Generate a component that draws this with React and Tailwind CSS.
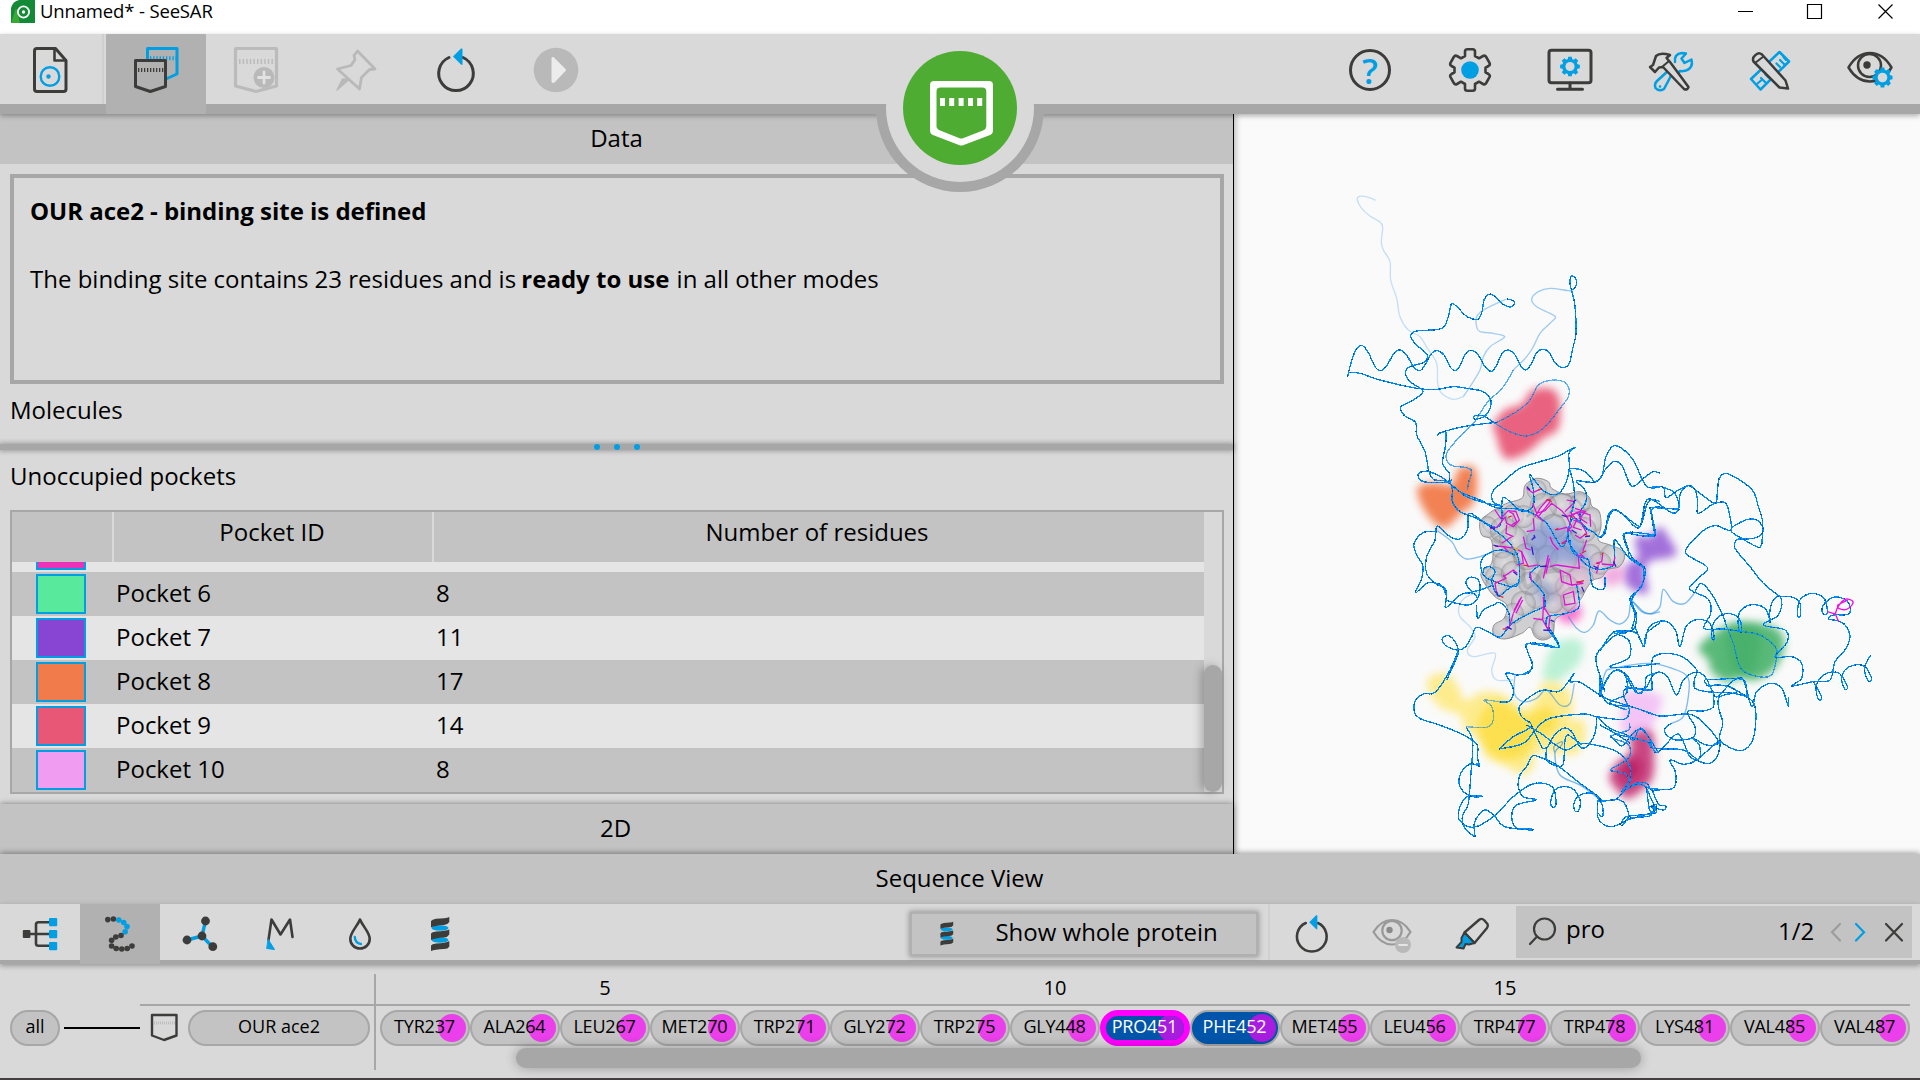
import React from "react";

const DARK = "#3c3c3b";
const BLUE = "#009fe3";

/* ---------- curve helpers ---------- */
function toPoints(s) {
  return s.trim().split(/\s+/).map((p) => p.split(",").map(Number));
}
function spline(s, closed) {
  const p = toPoints(s);
  const n = p.length;
  const at = (i) => (closed ? p[(i + n) % n] : p[Math.max(0, Math.min(n - 1, i))]);
  let d = `M${p[0][0]} ${p[0][1]}`;
  const last = closed ? n : n - 1;
  for (let i = 0; i < last; i++) {
    const [a, b, c, e] = [at(i - 1), at(i), at(i + 1), at(i + 2)];
    d += `C${(b[0] + (c[0] - a[0]) / 6).toFixed(1)} ${(b[1] + (c[1] - a[1]) / 6).toFixed(1)} ${(c[0] - (e[0] - b[0]) / 6).toFixed(1)} ${(c[1] - (e[1] - b[1]) / 6).toFixed(1)} ${c[0]} ${c[1]}`;
  }
  return closed ? d + "Z" : d;
}

/* ---------- icons ---------- */
function gearPath(cx, cy, ro, ri, teeth) {
  const out = [];
  for (let i = 0; i < teeth; i++) {
    const base = (i * 2 * Math.PI) / teeth - Math.PI / 2;
    [[-0.42, ri], [-0.27, ro], [0.27, ro], [0.42, ri]].forEach(([o, r]) => {
      const a = base + (o * 2 * Math.PI * 0.85) / teeth;
      out.push(`${(cx + r * Math.cos(a)).toFixed(2)} ${(cy + r * Math.sin(a)).toFixed(2)}`);
    });
  }
  return "M" + out.join("L") + "Z";
}

function Icon({ x, y, w, h, children }) {
  return (
    <svg width={w} height={h} viewBox={`${x} ${y} ${w} ${h}`} fill="none" strokeLinecap="round" strokeLinejoin="round" className="block shrink-0">
      {children}
    </svg>
  );
}

const FileIcon = () => (
  <Icon x={20} y={40} w={60} h={60}>
    <path d="M37 48.500H55.500L66 60.500V89q0 2.500-2.500 2.500H37q-2.500 0-2.500-2.500V51q0-2.500 2.500-2.500Z" stroke={DARK} strokeWidth="3" />
    <path d="M54.500 49V60.500H65.500" stroke={DARK} strokeWidth="2.600" />
    <circle cx="50" cy="76.500" r="9.300" stroke={BLUE} strokeWidth="2.400" />
    <circle cx="48.500" cy="76.500" r="2.200" fill={BLUE} />
  </Icon>
);
const PocketsIcon = () => (
  <Icon x={126} y={40} w={60} h={60}>
    <path d="M147.500 58V48.500H177V74L167 78.500" stroke={BLUE} strokeWidth="3" />
    <path d="M150 58.200H176" stroke={BLUE} strokeWidth="4" strokeDasharray="1.300 1.900" strokeLinecap="butt" />
    <path d="M135.500 60.500H165.500V86.500L150.300 91.500L135.500 86.500Z" stroke={DARK} strokeWidth="3" />
    <path d="M138 70H164" stroke={DARK} strokeWidth="4" strokeDasharray="1.300 1.700" strokeLinecap="butt" />
  </Icon>
);
const AddPocketIcon = () => (
  <Icon x={226} y={40} w={60} h={60}>
    <path d="M235.500 48.500H276.500V86L256 91.500L235.500 86Z" stroke="#bbb" strokeWidth="3.200" />
    <path d="M239 61.500H274" stroke="#bbb" strokeWidth="5" strokeDasharray="1.500 2.100" strokeLinecap="butt" />
    <circle cx="264" cy="77.500" r="10.500" fill="#b9b9b9" />
    <path d="M258.500 77.500H269.500M264 72V83" stroke="#e2e2e2" strokeWidth="2.800" />
  </Icon>
);
const PinIcon = () => (
  <Icon x={326} y={40} w={60} h={60}>
    <path d="M357.500 51L375 69L369.500 69.500L361.500 77.500L359.500 89L348.500 79L337.500 69L351 65.500L355 59.500L354 55.500Z" stroke="#b9b9b9" strokeWidth="2.800" />
    <path d="M349 79.500L337 90L342.500 79Z" fill="#b9b9b9" stroke="#b9b9b9" strokeWidth="1.500" />
  </Icon>
);
const ResetIcon = ({ scale = 1 }) => (
  <svg width={60 * scale} height={60 * scale} viewBox="426 40 60 60" fill="none" className="block">
    <path d="M449 57.500A17.300 17.300 0 1 0 463 57.500" stroke={DARK} strokeWidth="3" strokeLinecap="round" />
    <path d="M453 56.500L461 48.500Q462.500 48 462.500 49.500V64Q462.500 65.500 461 64.500Z" fill={BLUE} />
  </svg>
);
const PlayIcon = () => (
  <Icon x={526} y={40} w={60} h={60}>
    <circle cx="556" cy="70" r="22.300" fill="#b9b9b9" />
    <path d="M551.500 58Q553 56 555 58.500L565.500 69Q566.500 70 565.500 71L555 82Q553 84 551.500 82Z" fill="#ececec" />
  </Icon>
);
const HelpIcon = () => (
  <div className="flex h-[42px] w-[42px] items-center justify-center rounded-full border-[3px] border-[#3c3c3b] text-[35px] leading-none font-semibold text-[#009fe3]">
    ?
  </div>
);
const GearIcon = () => (
  <Icon x={1440} y={40} w={60} h={60}>
    <path
      d="M1465 56V51.500Q1465 49.200 1467.500 49.200H1472.500Q1475 49.200 1475 51.500V56L1479 58.300L1483 56Q1485 55 1486.200 57L1489.500 62.800Q1490.500 64.800 1488.500 66L1485.500 67.700V72.300L1488.500 74Q1490.500 75.200 1489.500 77.200L1486.200 83Q1485 85 1483 84L1479 81.700L1475 84V88.500Q1475 90.800 1472.500 90.800H1467.500Q1465 90.800 1465 88.500V84L1461 81.700L1457 84Q1455 85 1453.800 83L1450.500 77.200Q1449.500 75.200 1451.500 74L1454.500 72.300V67.700L1451.500 66Q1449.500 64.800 1450.500 62.800L1453.800 57Q1455 55 1457 56L1461 58.300Z"
      stroke={DARK}
      strokeWidth="2.600"
    />
    <circle cx="1470" cy="70" r="8.800" fill={BLUE} />
  </Icon>
);
const MonitorIcon = () => (
  <Icon x={1540} y={40} w={60} h={60}>
    <rect x="1549" y="50.300" width="42" height="32.400" rx="2.500" stroke={DARK} strokeWidth="3" />
    <path d="M1570 83V89M1557.500 89.300H1582.500" stroke={DARK} strokeWidth="3" />
    <path d={gearPath(1570, 66.500, 10, 7.800, 8)} fill={BLUE} />
    <circle cx="1570" cy="66.500" r="4.600" fill="#d9d9d9" />
  </Icon>
);
const ToolsIcon = () => (
  <Icon x={1640} y={40} w={60} h={60}>
    <path d="M1673 72L1664 89Q1659 92 1655.500 88Q1654 84 1657 81L1669 70M1675 62Q1674 54 1682 53L1686 53.500L1681.500 58.500L1684.500 63L1691.500 59.500Q1693.500 68 1686 70.500Q1682 71.500 1680 71L1677 74" stroke={BLUE} strokeWidth="2.500" />
    <circle cx="1660" cy="86.500" r="1.300" fill={BLUE} />
    <path d="M1663 67L1684 89Q1687.500 90.500 1688.500 87L1670 62L1666.500 58L1670 55Q1660 52 1656 56L1653 65L1650 67L1655 72L1659 67.500Z" fill="#d9d9d9" stroke={DARK} strokeWidth="2.500" />
    <path d="M1662 67L1669 61" stroke={DARK} strokeWidth="2" />
  </Icon>
);
const RulerPencilIcon = () => (
  <Icon x={1740} y={40} w={60} h={60}>
    <path d="M1751 79L1779.500 52L1789 61.500L1760.500 89.500Z" stroke={BLUE} strokeWidth="2.500" />
    <path d="M1757.500 83.500L1761 80.500M1761 78L1765.500 82.500M1765.500 74.500L1768.500 77.500M1776.500 63.500L1780 67M1780 60L1784.500 64.500M1783.500 57L1786 60" stroke={BLUE} strokeWidth="2.200" />
    <path d="M1753.500 61.500Q1752 58 1755 55.500Q1758.500 51.500 1762 54.500L1785.500 80.500L1788 88.500L1779.500 87.500Z" fill="#d9d9d9" stroke={DARK} strokeWidth="2.500" />
    <path d="M1755 63L1763.500 56.500" stroke={DARK} strokeWidth="2" />
  </Icon>
);
const EyeGearIcon = () => (
  <Icon x={1840} y={40} w={60} h={60}>
    <path d="M1848.500 67.500Q1857 53 1870 53Q1883 53 1891.500 67.500Q1883 81.500 1870 81.500Q1857 81.500 1848.500 67.500Z" stroke={DARK} strokeWidth="2.500" />
    <circle cx="1869.500" cy="65.500" r="11.500" stroke={DARK} strokeWidth="2.500" />
    <circle cx="1867" cy="65" r="3.700" fill={DARK} />
    <path d={gearPath(1882.500, 77.500, 10.200, 8, 8)} fill={BLUE} />
    <circle cx="1882.500" cy="77.500" r="4.800" fill="#d9d9d9" />
  </Icon>
);

const TreeIcon = () => (
  <Icon x={10} y={904} w={60} h={60}>
    <path d="M50 922.300H38.500Q36 922.300 36 924.500V943.500Q36 945.700 38.500 945.700H50M28 934H50" stroke={DARK} strokeWidth="2.600" />
    <rect x="22.800" y="930" width="7.600" height="8" rx="1" fill={DARK} />
    <rect x="49" y="918" width="8.200" height="8.200" rx="1" fill={BLUE} />
    <rect x="49" y="930" width="8.200" height="8.200" rx="1" fill={BLUE} />
    <rect x="49" y="942" width="8.200" height="8.200" rx="1" fill={BLUE} />
  </Icon>
);
const ChainIcon = () => {
  const dots = toPoints("107.8,919.6 113.4,919 118.8,920 123.7,922.5 127,926.6 125.2,931.7 121,935.5 115.8,937 111.6,940.3 111.6,946 116.2,948.5 121.8,949 127.2,948.5 132,946");
  return (
    <Icon x={90} y={904} w={60} h={60}>
      {dots.map(([x, y], i) => (
        <circle key={i} cx={x} cy={y} r="2.800" fill={i >= 2 && i <= 5 ? BLUE : DARK} />
      ))}
    </Icon>
  );
};
const MoleculeIcon = () => (
  <Icon x={170} y={904} w={60} h={60}>
    <path d="M205.500 921L202 936L187 940M202 936L212.500 947" stroke={BLUE} strokeWidth="3.400" />
    <circle cx="205.500" cy="921" r="4.400" fill={DARK} />
    <circle cx="202" cy="936" r="4.400" fill={DARK} />
    <circle cx="187" cy="940" r="4.400" fill={DARK} />
    <circle cx="212.800" cy="946.700" r="4.400" fill={DARK} />
  </Icon>
);
const MIcon = () => (
  <Icon x={250} y={904} w={60} h={60}>
    <path d="M268.500 940L271.500 919.500L280.500 934.500L290 919.500L292.500 937" stroke={DARK} strokeWidth="2.600" />
    <path d="M268.300 939.500L274.500 949.500L267 948.500Z" fill={BLUE} stroke={BLUE} />
  </Icon>
);
const DropIcon = () => (
  <Icon x={330} y={904} w={60} h={60}>
    <path d="M360 919.500C357 927 350.300 932 350.300 939A9.700 9.500 0 0 0 369.700 939C369.700 932 363 927 360 919.500Z" stroke={DARK} strokeWidth="2.600" />
    <path d="M354.800 937Q355 943 361 944" stroke={BLUE} strokeWidth="2.400" />
  </Icon>
);
const HelixIcon = ({ scale = 1 }) => (
  <svg width={22 * scale} height={36 * scale} viewBox="429 916 22 36" className="block shrink-0">
    <ellipse cx="440" cy="928" rx="8.500" ry="2.800" fill={BLUE} />
    <ellipse cx="440" cy="940" rx="8.500" ry="2.800" fill={BLUE} />
    <path d="M431 921Q432 919.500 436 918.800Q446 918.500 449.300 917V922Q448 924.500 444 925Q435 925.500 431 927.500Z" fill={DARK} />
    <path d="M431 933.500Q432 932 436 931.500Q446 931 449.300 929.500V934.500Q448 937 444 937.500Q435 938 431 940Z" fill={DARK} />
    <path d="M431 945.500Q432 944 436 943.500Q446 943 449.300 941V946.500Q448 949 444 949Q435 949.500 431 951Z" fill={DARK} />
  </svg>
);
const EyeMinusIcon = () => (
  <Icon x={1362} y={904} w={60} h={60}>
    <path d="M1373.500 932Q1381 920 1392 920Q1403 920 1410.500 932Q1403 944.500 1392 944.500Q1381 944.500 1373.500 932Z" stroke="#999" strokeWidth="2.200" />
    <circle cx="1392" cy="930.500" r="9.700" stroke="#999" strokeWidth="2.200" />
    <circle cx="1389.500" cy="930" r="3.200" fill="#8a8a8a" />
    <circle cx="1403" cy="945" r="8" fill="#b9b9b9" />
    <path d="M1399 945H1407" stroke="#e4e4e4" strokeWidth="1.800" />
  </Icon>
);
const MarkerIcon = () => (
  <Icon x={1442} y={904} w={60} h={60}>
    <path d="M1464.500 932.500L1479.500 919.500Q1482 918 1484 920L1487.500 924Q1488.500 926 1487 928L1474.500 943Z" fill="#d9d9d9" stroke={DARK} strokeWidth="2.400" />
    <path d="M1464.500 932.500L1474.500 943L1469 944.500L1465.500 944L1463.500 948.500L1456.500 947.500L1461.500 942L1461.500 938Z" fill={BLUE} stroke={DARK} strokeWidth="2" />
  </Icon>
);

function SequencePocketIcon() {
  return (
    <Icon x={146} y={1010} w={36} h={36}>
      <path d="M152 1015H176.500V1035.500L164 1040L152 1035.500Z" stroke={DARK} strokeWidth="2.400" />
      <path d="M154 1023H175" stroke="#bdbdbd" strokeWidth="3" strokeDasharray="1 1" strokeLinecap="butt" />
    </Icon>
  );
}

/* ---------- 3D scene ---------- */
const T = {
  a: "translate(1320 170) scale(.33333)",
  b: "translate(1380 440) scale(.33333)",
  c: "translate(1380 620) scale(.33333)",
  d: "translate(1600 430) scale(.33333)",
};

const BLOBS = [
  ["a", "#e85775", 0.92, "520,765 555,720 605,702 635,662 690,655 718,690 715,775 670,805 625,845 565,868 540,840 530,800"],
  ["b", "#f27b4b", 0.95, "115,140 170,128 215,135 238,85 285,85 290,160 272,200 248,215 215,250 190,264 155,240 120,185"],
  ["d", "#9a62d8", 0.9, "105,330 130,315 145,325 180,290 205,320 230,368 200,385 160,390 135,415 145,480 130,492 90,475 70,440 85,400 115,385"],
  ["b", "#f094d8", 0.75, "670,390 720,375 735,410 700,438 670,425"],
  ["b", "#f94fc0", 0.75, "530,500 590,490 605,525 575,550 540,540"],
  ["c", "#b5f0d2", 0.9, "495,130 510,95 530,65 600,60 605,115 565,160 520,190 490,170"],
  ["c", "#fee97c", 0.85, "145,175 200,160 235,200 255,240 310,215 370,225 430,270 465,240 495,185 560,205 580,260 570,300 610,300 615,360 580,405 510,395 465,400 460,440 430,465 370,435 320,410 300,360 255,330 240,285 190,268 150,225"],
  ["c", "#fddc35", 0.7, "300,290 350,240 410,270 440,290 500,260 530,300 510,340 460,350 450,390 390,420 330,400 300,350"],
  ["d", "#3eae62", 0.85, "295,655 340,610 400,580 470,578 520,590 550,620 550,665 525,715 470,750 420,745 380,755 335,725 325,690"],
  ["d", "#2fa457", 0.35, "390,590 470,590 480,650 455,730 400,720 380,650"],
  ["d", "#f1b3f4", 0.75, "70,790 120,780 185,800 175,850 155,890 130,915 65,905 65,850"],
  ["d", "#c22c6e", 0.85, "95,915 155,905 162,970 155,1050 90,1105 60,1090 28,1045 50,1000 90,970"],
  ["d", "#b30d56", 0.6, "60,1020 100,980 125,1010 110,1045 75,1055"],
];

const SURFACE =
  "300,245 325,222 350,205 385,188 415,180 430,168 436,135 470,115 505,125 515,145 555,162 600,155 628,172 635,198 658,215 663,260 655,300 690,315 725,330 734,352 718,380 685,388 665,412 640,420 620,445 602,478 570,510 545,525 525,540 518,585 490,600 465,590 450,562 425,580 375,597 342,585 342,555 372,535 380,495 345,470 320,440 303,400 335,370 338,320 330,295 305,285";

const BUBBLES = toPoints(
  "470,150 545,195 600,190 635,240 400,225 345,245 320,262 370,270 430,230 490,200 365,320 400,300 375,370 345,410 400,400 470,300 520,260 580,310 610,270 630,345 700,350 660,370 600,420 560,440 510,420 470,470 520,490 430,490 400,520 370,565 490,565 580,480 350,435 440,350 500,350 550,360 450,430"
);

const BACKBONE = [
  ["a", 1, "560,387 580,392 583,402 570,411 545,400 520,376 505,374 492,390 486,425 475,447 455,446 435,435 405,405 393,405 385,440 372,470 350,479 290,483 272,497 285,520 320,552 322,565 310,578 270,590 256,608 270,635 305,658 305,672 280,690 245,708 241,718 255,738 287,758 290,795 315,845 325,900"],
  ["a", 1, "83,620 90,590 105,545 125,526 145,548 165,590 182,602 200,588 220,553 240,540 260,555 280,590 300,602 318,580 335,550 352,542 372,555 390,590 405,602 420,588 435,553 455,541 475,555 495,590 515,604 530,585 545,552 565,540 585,555 605,592 620,599 635,580 650,548 670,538 688,548 705,578 730,593 748,580 757,540 768,490 765,410 757,370 750,340 755,318 768,328 769,345 758,360"],
  ["a", 1, "83,620 88,608 120,610 180,630 290,655 350,658 400,650 440,655 490,665 512,690 510,715 495,738 465,748 463,738 490,738 525,760"],
  ["a", 0.6, "525,760 570,785 620,798 670,775 720,715 745,680 745,650 725,633 685,632 655,645 630,690 590,725 530,757"],
  ["a", 1, "530,757 440,768 370,785 352,795 365,788 378,787 376,830 368,880 388,910 388,930"],
  ["a", 0.65, "580,600 550,650 500,700 460,760 410,810 380,850 382,875 400,888 440,893 455,905 445,940 443,960"],
  ["b", 1, "145,90 160,118 190,122 215,135 260,170 320,190 365,198"],
  ["b", 1, "145,93 120,97 115,110 130,125 190,127 215,120"],
  ["b", 1, "150,95 190,115 240,155 300,180 350,203 430,210 495,245 530,300 545,320 560,300 565,265 580,235 600,245 625,270"],
  ["b", 1, "208,118 217,150 217,185 240,215 290,235 330,260 380,300 410,340 418,375 415,430 395,440 345,425 310,405 303,365 325,340 365,330 405,345"],
  ["b", 1, "370,200 340,185 338,155 370,125 420,85 480,65 530,50 585,22 567,40 568,85 555,135 530,163 490,152 450,105 460,150 458,200 420,212 370,172 365,240 350,262 310,245 268,220 262,270 240,297 210,290 172,258 165,300 140,350 140,400 165,430 195,445 200,470 198,503 240,465 280,460 294,480"],
  ["b", 1, "172,275 130,278 102,310 110,345 128,375 125,415 107,458 140,430 160,428 185,437 200,470 198,480 230,490 265,495 290,480 300,450 295,420 270,412 258,430 275,453 300,450 340,435"],
  ["b", 1, "310,400 312,385 330,380 345,395 335,425 355,467 380,450 412,430"],
  ["b", 1, "290,495 293,535 310,510 340,495 360,488 385,515 390,555"],
  ["b", 1, "495,500 450,520 400,548 360,590 330,578 290,562 275,590 255,622 230,630 195,615 187,595 205,587 225,605 235,635 225,665 200,720"],
  ["b", 1, "480,375 450,400 455,420 490,460 495,500"],
  ["b", 1, "590,435 597,500 560,520 505,530 500,560 520,590 535,622 490,617 440,612 445,640 457,670 450,695 430,705"],
  ["b", 1, "568,85 610,92 640,127 590,123 615,150 618,185 600,220 610,260 640,275 665,290 690,225 710,210 770,255 785,250 800,195 815,178 840,185"],
  ["b", 1, "568,85 580,130 583,180 575,220 565,300 590,340 620,375 660,388 700,375 703,340 705,300 745,350 795,385 785,435 755,480 768,520 765,560 745,575 700,575"],
  ["b", 1, "600,123 650,125 675,90 700,65 725,75 755,138 790,115 820,95 840,100"],
  ["b", 1, "640,127 665,110 678,50 700,18 725,25 760,60 785,115 805,142 840,142"],
  ["b", 1, "795,385 750,355 745,330 735,280 790,280 822,285 825,270 815,210 840,200"],
  ["b", 1, "570,300 575,330 595,350 625,360 630,400 640,440 672,447 675,410"],
  ["b", 1, "700,577 745,600 752,640 738,660 690,680 760,680 840,670"],
  ["b", 1, "765,560 790,618 800,580 840,548"],
  ["b", 1, "740,578 700,590 652,640 650,675 664,718 675,757"],
  ["c", 1, "235,92 205,160 165,217 130,222 105,245 105,280 125,298 170,312 240,340 290,372 292,410 298,438 290,430"],
  ["c", 1, "298,438 270,432 242,460 240,500 270,528 303,530 300,526 262,530 240,560 238,600 280,622 340,590 400,530 450,495 490,490 520,505 528,550 518,562 512,545 525,510 550,500 580,508 600,540 597,570 585,573 582,550 600,525 640,520 660,545"],
  ["c", 1, "283,650 255,625 247,590 265,550 272,470 278,365 258,322"],
  ["c", 0.5, "258,320 320,322 340,300 335,260 312,240 360,246"],
  ["c", 1, "360,246 385,245 398,230 398,200 378,160 415,165 445,155 457,135 440,75 490,72 535,83 530,60 505,20"],
  ["c", 1, "285,650 283,610 300,580 320,570 345,590 375,620 453,630 450,626 410,625 395,590 410,555 468,540 430,530 415,500 420,465 440,440 455,410 475,410 530,435 600,490 655,530 660,545"],
  ["c", 1, "357,387 400,350 455,318 425,290 418,260 450,230 490,210 540,213 582,160 570,185 600,187 660,225 690,240 770,265 840,290"],
  ["c", 1, "357,387 430,370 470,325 510,295 610,282 650,290 730,298 748,270 732,230 740,205 800,210 818,205 815,180"],
  ["c", 1, "455,318 470,350 488,384 505,378 520,350 550,325 575,335 600,380 620,380 645,340 650,290"],
  ["c", 1, "440,315 490,345 520,370 560,390 605,370 700,390 745,430 750,480 725,515"],
  ["c", 1, "500,385 500,420 530,438 550,430 557,350 580,355 605,375"],
  ["c", 0.8, "725,515 745,485 735,460 692,450 740,420 752,395 740,370 692,350 745,330 748,310"],
  ["c", 1, "660,545 720,540 743,570 740,600 690,620 655,595 655,540 668,560 668,590 655,580"],
  ["c", 1, "725,515 770,490 800,490 815,510 840,510"],
  ["c", 1, "725,610 740,590 820,580 815,560 830,555 820,575 808,565 800,505"],
  ["c", 1, "660,220 690,165 715,150 735,165 742,200 735,225 690,248 740,270"],
  ["c", 1, "715,152 740,165 775,220 795,200 800,170 840,155"],
  ["c", 1, "650,290 690,325 740,345 760,360 785,325 835,398"],
  ["d", 1, "0,320 15,310 25,255 45,240 70,255 105,290 122,285 135,220 150,207 175,220 215,248 235,240 240,195 265,167 300,190 345,220 352,190 358,145 385,132 455,178 475,230 487,270 487,320 478,352 425,325 392,300 425,275 460,267 485,285 487,310 460,325 425,327 410,330 405,355 450,410 490,460 540,500"],
  ["d", 1, "150,172 190,172 198,203 235,180 265,167 285,178 293,215 295,250 340,222 375,218 388,250 392,300 350,287 320,295 285,325 260,355 262,375 322,412 300,440 270,470 280,485 325,508 332,550 312,595 370,597 420,604"],
  ["d", 0.65, "420,604 480,615 525,650 530,680 512,737 455,735 420,710 400,640 380,590"],
  ["d", 1, "380,590 370,560 340,500 305,460 285,485"],
  ["d", 1, "165,318 130,318 75,310 73,330 95,380 130,415 125,470 90,505 105,555 95,598"],
  ["d", 1, "150,232 165,318"],
  ["d", 1, "150,232 240,238"],
  ["d", 1, "190,172 225,190 240,235"],
  ["d", 1, "510,578 510,540 520,510 540,500 545,530 530,560 490,585 555,600 562,635 525,680 575,680 605,700 605,745 575,768 640,755 690,750 705,695 735,660 750,620 735,585 712,572 685,567 700,555 745,553 750,530 735,508 700,502 670,525 668,550 682,548 672,505 635,490 600,510 593,555 601,558 598,515 570,500 540,500"],
  ["d", 1, "510,572 495,535 455,524 420,545 415,590 425,607 420,570 395,552 365,555 340,580 335,620 343,628 335,590 320,573 285,570 258,590 240,650 228,605 205,577 175,575 145,595 132,650 115,615 90,603 40,607 0,662"],
  ["d", 1, "0,790 25,740 50,720 75,735 95,770 115,790 140,770 160,735 185,728 205,745 230,795 250,750 285,727 315,740 340,790 355,798 400,752 430,750 455,830 470,785 510,760 545,775 565,828 565,800"],
  ["d", 1, "0,800 0,735 5,790"],
  ["d", 1, "640,755 665,800 655,808 648,770 665,740 690,727 720,732 742,770 735,778 725,750 735,720 765,705 795,710 815,745 805,752 793,715 812,675"],
  ["d", 1, "155,780 155,700 165,678 200,670 250,682 290,720 283,750 285,775 320,785 400,790 440,800"],
  ["d", 1, "440,803 430,750 350,748 315,750 325,768 350,765 385,770 440,800 465,830 465,900 450,945 415,962 360,930 368,880 355,830 360,800 410,785 380,765"],
  ["d", 1, "340,795 340,830 310,843 262,845 285,890 280,922 230,930 200,915 195,895 215,880"],
  ["d", 1, "0,780 25,820 100,832 180,858 265,852 310,878 355,935 320,945 275,922 298,945 298,985 270,980 245,925 225,915 170,968 145,920 120,897 90,920 65,948 30,915"],
  ["d", 1, "45,912 140,935 160,955 250,960 300,995 335,998 355,970 355,935 290,990 250,1003 210,990 227,1030 218,1075 150,1075 115,1062 65,1085"],
  ["d", 1, "75,770 155,780"],
  ["d", 1, "0,885 45,910 90,940"],
  ["d", 1, "140,1075 155,1110 170,1145 155,1148 148,1130 190,1140 197,1128 175,1122 155,1075"],
  ["d", 1, "0,1110 45,1110 75,1080"],
  ["d", 1, "80,1170 150,1150 165,1140 155,1125"],
  ["d", 1, "65,1188 90,1165 150,1158 150,1140"],
];

const FAINT = [
  ["a", 0.22, "167,91 145,82 118,79 112,90 125,115 150,138 182,158 188,175 184,215 190,240 210,275 212,330 230,385 240,440 265,480 300,500 322,535 350,580 353,640 365,670 400,688 430,680"],
  ["a", 0.35, "430,680 450,650 480,600 490,560 510,530 550,505 550,497 520,490 480,485 470,470 470,440 490,420 530,400 560,387"],
  ["a", 0.38, "758,360 745,362 690,355 655,365 635,388 650,410 690,430 707,442 690,460 660,490 640,530 620,560 580,600"],
  ["b", 0.5, "172,272 215,305 235,340 260,357 300,350 365,325"],
  ["b", 0.22, "300,455 260,470 238,495 240,530 270,560 285,590 262,630 280,650 345,640 335,690 350,720 400,720"],
  ["b", 0.5, "565,530 590,565 615,577 640,555 657,513 690,540 720,552 745,530 755,485 790,515 815,522 840,515"],
  ["c", 0.45, "405,165 403,220 430,245 470,235 500,210 540,255 570,250 583,190"],
  ["c", 0.55, "525,400 522,380 545,365 545,375 525,400 540,465 600,495 655,535"],
  ["d", 0.5, "0,795 15,730 40,715 150,700 230,720 265,745 265,800 250,860 215,880"],
  ["d", 0.5, "95,510 125,545 155,550 180,530 190,478 220,515 255,520 285,487"],
];

const STICKS = [
  "440,145 458,158 480,148", "458,190 470,220 495,212 515,190 545,212 565,235", "470,225 490,245", "465,230 480,205 500,182 512,178",
  "473,232 495,205 510,185", "345,210 362,235 385,212 408,215 418,240 400,260 380,250 375,230", "375,232 350,262 330,265", "380,255 378,280 400,290",
  "388,215 400,222 410,245 395,255", "460,235 463,270 440,275", "345,318 370,320 385,335", "365,310 395,290", "370,320 405,325 425,335 430,370 410,375",
  "430,290 438,325 452,330", "425,335 445,380 475,375", "370,405 378,415 345,430 350,460", "370,410 400,390 412,400", "555,215 580,190", "560,230 600,215 630,225 632,260",
  "560,230 575,260 560,275", "580,240 605,250 620,280 600,295 585,285", "590,215 605,240", "530,270 560,262 575,278", "560,300 545,312",
  "505,345 490,415", "508,355 498,400", "510,380 530,375 600,385", "595,350 598,385", "590,345 610,350 600,340", "540,390 570,405 575,435 545,425 540,390", "575,435 610,430 590,425",
  "550,465 580,455 585,490 555,495 550,465", "648,370 665,365 668,345", "665,372 700,375 705,350", "655,375 650,400", "560,180 585,185", "425,470 400,520", "420,478 402,512",
  "428,480 408,520", "400,520 388,560 375,565", "490,500 488,540 505,570 510,530 490,500", "488,540 460,535", "490,470 492,510", "510,290 518,310 535,330", "450,395 455,425",
  "620,300 608,335", "570,215 590,240 580,262 605,270", "585,205 615,215 600,235 622,250", "600,215 575,225",
];
const TIPS_BLUE = ["440,140 450,150", "330,262 345,265", "340,315 355,320", "462,285 465,295", "350,455 355,470", "400,395 412,405", "455,300 465,290", "580,185 588,180", "615,290 630,288", "490,570 512,572", "380,560 395,568", "455,320 460,345", "640,378 655,385", "700,365 708,380", "575,270 590,280", "512,540 522,545", "545,225 560,230", "605,440 612,455", "480,380 500,378"];
const TIPS_RED = ["475,150 485,146", "360,468 370,472", "368,567 380,567", "500,178 515,185", "385,232 395,228", "605,340 618,332", "665,345 670,338", "525,270 535,265", "612,282 622,286", "590,428 612,422", "345,425 352,428", "545,308 555,310", "430,375 445,378", "568,228 580,232", "650,370 660,372"];

function ProteinScene() {
  return (
    <svg width="686" height="740" viewBox="1234 114 686 740" fill="none" className="block">
      <defs>
        <filter id="soft" x="-30%" y="-30%" width="160%" height="160%">
          <feGaussianBlur stdDeviation="12" />
        </filter>
        <radialGradient id="bubble">
          <stop offset="0" stopColor="#ececef" stopOpacity=".65" />
          <stop offset=".7" stopColor="#c4c4c8" stopOpacity=".4" />
          <stop offset="1" stopColor="#77777c" stopOpacity=".45" />
        </radialGradient>
        <clipPath id="surfaceClip">
          <path d={spline(SURFACE, true)} />
        </clipPath>
      </defs>

      {BLOBS.map(([t, color, o, pts], i) => (
        <g key={i} transform={T[t]}>
          <path d={spline(pts, true)} fill={color} opacity={o} filter="url(#soft)" />
        </g>
      ))}

      {FAINT.map(([t, o, pts], i) => (
        <g key={i} transform={T[t]}>
          <path d={spline(pts)} stroke="#0a7fe0" strokeOpacity={o} strokeWidth="4" />
        </g>
      ))}

      <g transform={T.b}>
        <path d={spline(SURFACE, true)} fill="#c6c6c9" fillOpacity=".8" stroke="#8f8f93" strokeWidth="3" />
        <g clipPath="url(#surfaceClip)">
          {BUBBLES.map(([x, y], i) => (
            <circle key={i} cx={x} cy={y} r={30 + ((i * 7) % 13)} fill="url(#bubble)" fillOpacity=".8" stroke="#77777b" strokeOpacity=".35" strokeWidth="1.500" />
          ))}
          <path d={spline("440,290 500,245 560,270 610,320 630,370 570,370 520,370 450,360", true)} fill="#7a90d4" opacity=".65" filter="url(#soft)" />
          <path d={spline("460,420 510,430 530,470 500,490 465,470", true)} fill="#8290c4" opacity=".5" filter="url(#soft)" />
          <path d={spline("600,360 660,350 650,400 590,470 530,490 540,400", true)} fill="#e3a5cf" opacity=".35" filter="url(#soft)" />
          <path d={spline("345,300 390,330 420,370 440,440 490,400 540,390")} stroke="#6f6f78" strokeWidth="14" opacity=".25" />
          <path d={spline("440,230 490,190 540,160 590,180 620,220")} stroke="#5f5f66" strokeWidth="8" opacity=".25" />
        </g>
      </g>

      <g shapeRendering="crispEdges">
        {BACKBONE.map(([t, o, pts], i) => (
          <g key={i} transform={T[t]} opacity={o}>
            <path d={spline(pts)} stroke="#0090fa" strokeWidth="4.100" strokeLinejoin="round" />
            <path d={spline(pts)} stroke="#0056a8" strokeWidth="4.100" strokeDasharray="4 13" />
          </g>
        ))}
      </g>

      <g transform={T.b} strokeWidth="3.800">
        {STICKS.map((s, i) => (
          <polyline key={i} points={s} stroke="#dd11d4" />
        ))}
        {TIPS_BLUE.map((s, i) => (
          <polyline key={i} points={s} stroke="#2a1fc8" />
        ))}
        {TIPS_RED.map((s, i) => (
          <polyline key={i} points={s} stroke="#e02030" />
        ))}
        <path d="M400 322L414 330" stroke="#e5c800" />
      </g>
      <g transform={T.d} strokeWidth="4" stroke="#f010e0">
        <polyline points="682,545 706,552 716,575" />
        <path d={spline("706,552 714,530 735,508 757,512 756,525 740,538 718,536 714,525 740,512")} />
      </g>
    </svg>
  );
}

/* ---------- UI pieces ---------- */
function ToolButton({ children, className = "" }) {
  return <button className={`flex h-[70px] w-[100px] shrink-0 items-center justify-center pt-0.5 ${className}`}>{children}</button>;
}
function SeqButton({ children }) {
  return <button className="flex h-[60px] w-20 shrink-0 items-center justify-center">{children}</button>;
}

function Badge() {
  return (
    <div className="absolute top-6 left-[876px] z-20">
      <svg width="168" height="168" viewBox="876 24 168 168" fill="none">
        <path d="M876 104H1044V108A84 84 0 0 1 876 108Z" fill="#a7a7a7" />
        <circle cx="960" cy="108" r="74" fill="#d9d9d9" />
        <circle cx="960" cy="108" r="57" fill="#4eac32" />
        <path
          fillRule="evenodd"
          fill="#fff"
          d="M934 81H989Q993 81 993 85V130.500Q993 134 989.500 135.300L963 145.200Q961.300 145.800 959.600 145.200L933.500 135.300Q930 134 930 130.500V85Q930 81 934 81ZM940.500 87.500Q936.500 87.500 936.500 91.500V126Q936.500 129 939.500 130.300L959.600 138.200Q961.300 138.800 963 138.200L983.500 130.300Q986.300 129 986.300 126V91.500Q986.300 87.500 982.300 87.500Z"
        />
        {[940, 949.2, 958.6, 968, 977.2].map((x) => (
          <rect key={x} x={x} y="98" width="5" height="8" fill="#fff" />
        ))}
      </svg>
    </div>
  );
}

const ROWS = [
  ["Pocket 6", "8", "bg-[#58e99d]"],
  ["Pocket 7", "11", "bg-[#8844d2]"],
  ["Pocket 8", "17", "bg-[#f27b4b]"],
  ["Pocket 9", "14", "bg-[#e85775]"],
  ["Pocket 10", "8", "bg-[#f09cf1]"],
];

function PocketTable() {
  return (
    <div className="mx-[10px] mt-[18px] flex h-[284px] w-[1214px] shrink-0 border-2 border-[#a7a7a7]">
      <div className="w-[1192px]">
        <div className="flex h-[50px] bg-[#c3c3c3] text-center leading-[40px]">
          <div className="w-[102px] border-r-2 border-[#d9d9d9]" />
          <div className="w-[320px] border-r-2 border-[#d9d9d9] pr-0.5">Pocket ID</div>
          <div className="flex-1 pr-1">Number of residues</div>
        </div>
        <div className="h-[10px] bg-[#e5e5e5] pl-6">
          <div className="h-2 w-[50px] border-2 border-t-0 border-[#009fe3] bg-[#ec32b8]" />
        </div>
        {ROWS.map(([name, count, color], i) => (
          <div key={name} className={`flex h-[44px] leading-[41px] ${i % 2 ? "bg-[#e5e5e5]" : "bg-[#c3c3c3]"}`}>
            <div className="w-[104px] pt-0.5 pl-6">
              <div className={`h-10 w-[50px] border-2 border-[#009fe3] ${color}`} />
            </div>
            <div className="w-[320px]">{name}</div>
            <div>{count}</div>
          </div>
        ))}
      </div>
      <div className="flex flex-1 items-end">
        <div className="h-[127px] w-full rounded-[9px] bg-[#a7a7a7] shadow-[-3px_0_10px_rgba(0,0,0,0.25)]" />
      </div>
    </div>
  );
}

const RESIDUES = "TYR237 ALA264 LEU267 MET270 TRP271 GLY272 TRP275 GLY448 PRO451 PHE452 MET455 LEU456 TRP477 TRP478 LYS481 VAL485 VAL487".split(" ");

function Residue({ name }) {
  const hit = name === "PRO451";
  const match = name === "PHE452";
  const shell = hit
    ? "border-[6px] border-[#ff00ff] bg-[#0055aa] text-white"
    : match
      ? "border-2 border-[#a7a7a7] bg-[#0055aa] text-white"
      : "border-2 border-[#a7a7a7] bg-[#c3c3c3]";
  return (
    <div className={`relative flex h-9 w-[90px] shrink-0 items-center justify-center overflow-hidden rounded-full pr-px ${shell}`}>
      <div className={`absolute rounded-full ${hit ? "-top-0.5 -right-0.5 size-7 bg-[#a81ce0]" : match ? "top-0.5 right-0.5 size-7 bg-[#a81ce0]" : "top-0.5 right-0.5 size-7 bg-[#ea3fea]"}`} />
      <span className="relative -top-[2px] text-[18px] leading-none tracking-[-0.2px]">{name}</span>
    </div>
  );
}

export default function App() {
  return (
    <div className="relative flex h-[1080px] w-[1920px] flex-col overflow-hidden bg-[#d9d9d9] font-['Open_Sans','Noto_Sans',sans-serif] text-[24px] text-black">
      {/* title bar */}
      <div className="flex h-[34px] shrink-0 items-start justify-between bg-white">
        <div className="flex items-start pl-[11px]">
          <svg width="24" height="23" viewBox="0 0 24 23">
            <path d="M0 23V8Q2 1 8 0H24V23Z" fill="#128a36" />
            <path d="M0 23L5 8L9 23Z" fill="#39a935" />
            <circle cx="12.500" cy="12" r="5.600" fill="none" stroke="#fff" strokeWidth="1.800" />
            <circle cx="12.500" cy="12" r="1.700" fill="#fff" />
          </svg>
          <span className="ml-[5px] text-[18.5px] leading-[22px] tracking-[-0.15px]">Unnamed* - SeeSAR</span>
        </div>
        <svg width="184" height="34" viewBox="1736 0 184 34" fill="none" stroke="#000" strokeWidth="1.200">
          <path d="M1738 11.500H1753M1807.500 4.500H1821.500V18.500H1807.500ZM1878.500 4.500L1892.500 18.500M1892.500 4.500L1878.500 18.500" />
        </svg>
      </div>

      {/* main toolbar */}
      <div className="z-10 h-[80px] shrink-0 shadow-[0_2px_5px_rgba(0,0,0,0.3)]">
        <div className="flex h-[80px] justify-between border-b-[10px] border-[#a7a7a7] bg-[#d9d9d9]">
          <div className="flex">
            <ToolButton><FileIcon /></ToolButton>
            <div className="ml-[2px] h-[70px] w-[2px] bg-[#cfcfcf]" />
            <div className="ml-[2px] h-[80px] w-[100px] bg-[#b1b1b1]"><ToolButton><PocketsIcon /></ToolButton></div>
            <ToolButton><AddPocketIcon /></ToolButton>
            <ToolButton><PinIcon /></ToolButton>
            <ToolButton><ResetIcon /></ToolButton>
            <ToolButton><PlayIcon /></ToolButton>
          </div>
          <div className="flex">
            <ToolButton><HelpIcon /></ToolButton>
            <ToolButton><GearIcon /></ToolButton>
            <ToolButton><MonitorIcon /></ToolButton>
            <ToolButton><ToolsIcon /></ToolButton>
            <ToolButton><RulerPencilIcon /></ToolButton>
            <ToolButton><EyeGearIcon /></ToolButton>
          </div>
        </div>
      </div>
      <Badge />

      {/* middle */}
      <div className="flex h-[740px] shrink-0">
        <div className="z-[1] flex w-[1234px] flex-col border-r border-black bg-[#d9d9d9] shadow-[2px_0_6px_rgba(0,0,0,0.25)]">
          <div className="h-[50px] shrink-0 bg-[#c3c3c3] text-center leading-[47px]">Data</div>
          <div className="mx-[10px] mt-[10px] h-[210px] w-[1214px] shrink-0 border-4 border-[#a7a7a7] px-4 pt-[16px] leading-[34px]">
            <p className="font-bold tracking-[-0.03px]">OUR ace2 - binding site is defined</p>
            <p className="mt-[34px]">
              The binding site contains 23 residues and is <b className="-ml-px mr-px">ready to use</b> in all other modes
            </p>
          </div>
          <div className="h-[60px] shrink-0 pl-[10px] leading-[51px]">Molecules</div>
          <div className="flex h-[6px] shrink-0 items-center justify-center gap-[14px] bg-[#a7a7a7] shadow-[0_0_5px_1px_rgba(0,0,0,0.3)]">
            <i className="size-1.5 rounded-full bg-[#009fe3]" />
            <i className="size-1.5 rounded-full bg-[#009fe3]" />
            <i className="size-1.5 rounded-full bg-[#009fe3]" />
          </div>
          <div className="mt-[10px] h-[32px] shrink-0 pl-[10px] leading-[31px]">
            Unoccupied pockets
          </div>
          <PocketTable />
          <div className="mt-[10px] h-[50px] shrink-0 bg-[#c3c3c3] pr-0.5 text-center leading-[47px] shadow-[0_0_6px_rgba(0,0,0,0.45)]">2D</div>
        </div>
        <div className="w-[686px] bg-[#fafafa]">
          <ProteinScene />
        </div>
      </div>

      {/* sequence view */}
      <div className="z-[2] h-[50px] shrink-0 bg-[#c3c3c3] pr-px text-center leading-[47px] shadow-[0_-1px_6px_rgba(0,0,0,0.4)]">Sequence View</div>
      <div className="z-[3] flex h-[60px] shrink-0 border-b-4 border-[#a7a7a7] bg-[#d9d9d9] shadow-[0_2px_5px_rgba(0,0,0,0.3)]">
        <SeqButton><TreeIcon /></SeqButton>
        <div className="h-[60px] w-20 bg-[#b1b1b1]"><SeqButton><ChainIcon /></SeqButton></div>
        <SeqButton><MoleculeIcon /></SeqButton>
        <SeqButton><MIcon /></SeqButton>
        <SeqButton><DropIcon /></SeqButton>
        <SeqButton><HelixIcon /></SeqButton>
        <button className="mt-[8px] ml-[430px] flex h-[44px] w-[348px] items-center border-2 border-[#b0b0b0] bg-[#c3c3c3] pl-[27px] shadow-[0_0_5px_1px_rgba(0,0,0,0.3)]">
          <HelixIcon scale={0.7} />
          <span className="-mt-1 ml-[41px]">Show whole protein</span>
        </button>
        <div className="ml-[10px] h-14 w-[2px] bg-[#d1d1d1]" />
        <div className="ml-[2px] flex">
          <SeqButton><ResetIcon scale={0.86} /></SeqButton>
          <SeqButton><EyeMinusIcon /></SeqButton>
          <SeqButton><MarkerIcon /></SeqButton>
        </div>
        <div className="mt-[2px] ml-[4px] flex h-[52px] w-[396px] bg-[#c3c3c3]">
          <svg width="50" height="52" viewBox="1516 906 50 52" fill="none" stroke={DARK} strokeWidth="2.200" strokeLinecap="round">
            <circle cx="1544.500" cy="929" r="10.500" />
            <path d="M1537 936.500L1530 944" />
          </svg>
          <span className="leading-[46px]">pro</span>
          <span className="ml-[173px] leading-[50px]">1/2</span>
          <svg width="92" height="52" viewBox="1820 906 92 52" fill="none" strokeWidth="2.200" strokeLinecap="round" className="ml-auto">
            <path d="M1840 924L1832 932.300L1840 940.500" stroke="#9c9c9c" />
            <path d="M1856 924L1864 932.300L1856 940.500" stroke={BLUE} />
            <path d="M1886 924L1902 940.500M1902 924L1886 940.500" stroke={DARK} />
          </svg>
        </div>
      </div>
      <div className="flex h-[114px] shrink-0">
        <div className="flex w-[374px] flex-col pt-[40px]">
          <div className="ml-[140px] h-[2px] shrink-0 bg-[#a7a7a7]" />
          <div className="mt-[4px] flex h-9 items-center pl-[10px] text-[18px] leading-none">
            <div className="flex h-9 w-[50px] items-center justify-center rounded-full border-2 border-[#a7a7a7] bg-[#c3c3c3] pb-1">all</div>
            <div className="ml-1 h-[2px] w-[76px] bg-black" />
            <div className="ml-[6px]"><SequencePocketIcon /></div>
            <div className="ml-[6px] flex h-9 w-[182px] items-center justify-center rounded-full border-2 border-[#a7a7a7] bg-[#c3c3c3] pb-1">OUR ace2</div>
          </div>
        </div>
        <div className="mt-[10px] h-[96px] w-[2px] bg-[#a7a7a7]" />
        <div className="w-[1544px]">
          <div className="flex h-[40px] pt-[5px] text-[20px] leading-[38px]">
            <span className="ml-[184px] w-[90px] text-center">5</span>
            <span className="ml-[360px] w-[90px] text-center">10</span>
            <span className="ml-[360px] w-[90px] text-center">15</span>
          </div>
          <div className="h-[2px] w-[1534px] bg-[#a7a7a7]" />
          <div className="mt-[4px] flex pl-[4px]">
            {RESIDUES.map((r) => (
              <Residue key={r} name={r} />
            ))}
          </div>
          <div className="relative mt-[2px] ml-[140px] h-5 w-[1125px] rounded-full bg-[#a7a7a7] shadow-[0_0_12px_rgba(0,0,0,0.3)]" />
        </div>
      </div>
      <div className="h-[2px] shrink-0 bg-[#433e40]" />
    </div>
  );
}
